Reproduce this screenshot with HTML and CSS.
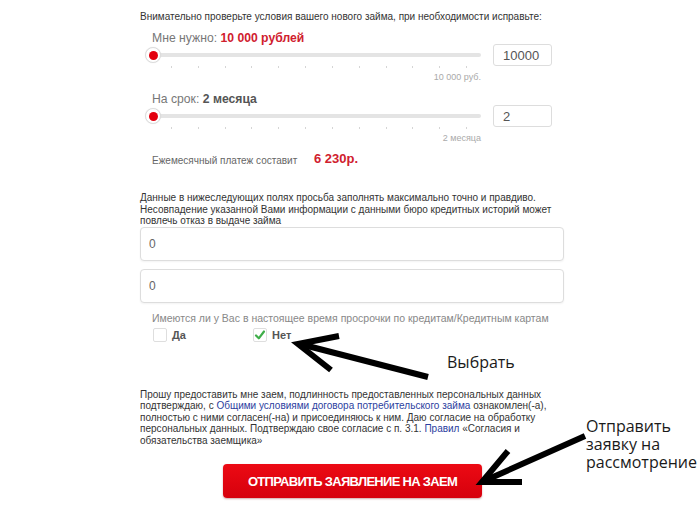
FILE: index.html
```html
<!DOCTYPE html>
<html lang="ru">
<head>
<meta charset="utf-8">
<title>Заявка на заем</title>
<link rel="stylesheet" href="styles.css">
</head>
<body>
<form class="form">
  <p class="intro">Внимательно проверьте условия вашего нового займа, при необходимости исправьте:</p>

  <div class="group first">
    <div class="label">Мне нужно: <b class="red">10 000 рублей</b></div>
    <div class="row">
      <div class="slider">
        <div class="track-wrap"><div class="track"><span class="thumb"></span></div></div>
        <div class="ticks"><i></i><i></i><i></i><i></i><i></i><i></i><i></i><i></i><i></i><i></i><i></i><i></i></div>
        <div class="caption">10 000 руб.</div>
      </div>
      <input class="num" type="text" value="10000">
    </div>
  </div>

  <div class="group second">
    <div class="label">На срок: <b class="dark">2 месяца</b></div>
    <div class="row">
      <div class="slider">
        <div class="track-wrap"><div class="track"><span class="thumb"></span></div></div>
        <div class="ticks"><i></i><i></i><i></i><i></i><i></i><i></i><i></i><i></i><i></i><i></i><i></i><i></i></div>
        <div class="caption">2 месяца</div>
      </div>
      <input class="num" type="text" value="2">
    </div>
  </div>

  <div class="payment"><span>Ежемесячный платеж составит</span><strong>6 230р.</strong></div>

  <p class="note">Данные в нижеследующих полях просьба заполнять максимально точно и правдиво.<br>Несовпадение указанной Вами информации с данными бюро кредитных историй может<br>повлечь отказ в выдаче займа</p>

  <input class="field" type="text" value="0">
  <input class="field" type="text" value="0">

  <p class="question">Имеются ли у Вас в настоящее время просрочки по кредитам/Кредитным картам</p>
  <div class="options">
    <label class="option"><span class="box"></span>Да</label>
    <label class="option"><span class="box checked"><svg viewBox="0 0 14 14" width="14" height="14"><path d="M3 7.5 L5.8 10.3 L11 3.5" fill="none" stroke="#3fae49" stroke-width="2.2" stroke-linecap="round" stroke-linejoin="round"/></svg></span>Нет</label>
  </div>

  <p class="consent">Прошу предоставить мне заем, подлинность предоставленных персональных данных<br>подтверждаю, с <a href="#">Общими условиями договора потребительского займа</a> ознакомлен(-а),<br>полностью с ними согласен(-на) и присоединяюсь к ним. Даю согласие на обработку<br>персональных данных. Подтверждаю свое согласие с п. 3.1. <a href="#">Правил</a> «Согласия и<br>обязательства заемщика»</p>

  <button class="submit" type="button">ОТПРАВИТЬ ЗАЯВЛЕНИЕ НА ЗАЕМ</button>
</form>

<div class="note-choose">Выбрать</div>
<div class="note-send"><span>Отправить</span><span>заявку на</span><span>рассмотрение</span></div>

<svg class="arrows" viewBox="0 0 700 515" width="700" height="515">
  <g fill="none" stroke="#000" stroke-width="6" stroke-linejoin="miter" stroke-linecap="butt">
    <line x1="428" y1="377" x2="300" y2="344"/>
    <polyline points="339,336 298,344 331,370"/>
    <line x1="585" y1="436" x2="484" y2="481"/>
    <polyline points="508,451 482,482 522,482"/>
  </g>
</svg>
</body>
</html>
```

FILE: styles.css
```css
html, body {
  margin: 0;
  padding: 0;
  background: #fff;
}

body {
  position: relative;
  width: 700px;
  height: 515px;
  overflow: hidden;
  font-family: "Liberation Sans", Arial, sans-serif;
}

.form {
  margin: 0 0 0 140px;
  width: 425px;
  padding-top: 11px;
}

.intro {
  margin: 0;
  font-size: 10px;
  line-height: 12px;
  color: #333;
  white-space: nowrap;
}

.group {
  padding-left: 7px;
}

.group.first {
  margin-top: 9px;
}

.group.second {
  margin-top: 10px;
}

.label {
  margin-left: 5px;
  font-size: 12.2px;
  line-height: 12px;
  color: #777;
}

.label .red {
  color: #d0202e;
}

.label .dark {
  color: #555;
}

.row {
  display: flex;
  align-items: flex-start;
  gap: 12px;
}

.slider {
  width: 334px;
}

.track-wrap {
  height: 22px;
  display: flex;
  align-items: center;
}

.track {
  position: relative;
  width: 100%;
  height: 4px;
  background: #e4e4e4;
  border-radius: 2px;
}

.thumb {
  position: absolute;
  left: -2px;
  top: -6px;
  width: 16px;
  height: 16px;
  box-sizing: border-box;
  border: 1px solid #dcdcdc;
  border-radius: 50%;
  background: #fff;
  box-shadow: 0 0 1px rgba(0, 0, 0, 0.1);
}

.thumb::after {
  content: "";
  position: absolute;
  left: 2.5px;
  top: 2.5px;
  width: 9px;
  height: 9px;
  border-radius: 50%;
  background: #e3000f;
}

.ticks {
  display: flex;
  justify-content: space-between;
  height: 2px;
  padding: 0 14px 0 24px;
}

.ticks i {
  display: block;
  width: 1px;
  height: 2px;
  background: #d5d5d5;
}

.caption {
  margin-top: 4px;
  text-align: right;
  font-size: 9px;
  line-height: 11px;
  color: #aaa;
}

.num {
  width: 59px;
  height: 22px;
  box-sizing: border-box;
  margin: 0;
  padding: 0 0 0 9px;
  border: 1px solid #ddd;
  border-radius: 3px;
  background: #fff;
  font-family: "Liberation Sans", Arial, sans-serif;
  font-size: 13px;
  color: #555;
  outline: none;
}

.payment {
  display: flex;
  align-items: flex-start;
  margin-top: 9px;
  padding-left: 12px;
}

.payment span {
  width: 162px;
  font-size: 10px;
  line-height: 16px;
  color: #666;
}

.payment strong {
  font-size: 13px;
  line-height: 11px;
  color: #d0202e;
}

.note {
  margin: 23px 0 0;
  font-size: 10px;
  line-height: 11.5px;
  color: #333;
  white-space: nowrap;
}

.field {
  display: block;
  width: 424px;
  height: 34px;
  box-sizing: border-box;
  margin: 0;
  padding: 0 0 0 8px;
  border: 1px solid #ddd;
  border-radius: 4px;
  background: #fff;
  box-shadow: 0 1px 2px rgba(0, 0, 0, 0.05);
  font-family: "Liberation Sans", Arial, sans-serif;
  font-size: 12px;
  color: #666;
  outline: none;
}

.field + .field {
  margin-top: 8px;
}

.question {
  margin: 9px 0 0;
  padding-left: 12px;
  font-size: 10.5px;
  line-height: 13px;
  color: #888;
  white-space: nowrap;
}

.options {
  display: flex;
  margin-top: 3px;
  padding-left: 13px;
}

.option {
  display: flex;
  align-items: center;
  gap: 5px;
  width: 100px;
  font-size: 11px;
  font-weight: bold;
  color: #555;
  line-height: 14px;
}

.box {
  display: block;
  width: 14px;
  height: 14px;
  box-sizing: border-box;
  border: 1px solid #dedede;
  border-radius: 2px;
  background: #fff;
}

.box svg {
  display: block;
  margin: -1px;
}

.consent {
  margin: 47px 0 0;
  font-size: 10px;
  line-height: 11.5px;
  color: #333;
  white-space: nowrap;
}

.consent a {
  color: #2b3ea0;
  text-decoration: none;
}

.submit {
  display: block;
  width: 259px;
  height: 34px;
  margin: 18px auto 0;
  padding: 0;
  border: 0;
  border-radius: 4px;
  background: linear-gradient(#ec0a14, #d6000c);
  box-shadow: 0 1px 2px rgba(120, 0, 0, 0.35);
  color: #fff;
  font-family: "Liberation Sans", Arial, sans-serif;
  font-size: 13px;
  font-weight: bold;
  letter-spacing: -0.7px;
}

.note-choose,
.note-send {
  position: absolute;
  font-family: "Open Sans", "Noto Sans", sans-serif;
  font-size: 16px;
  color: #1a1a1a;
}

.note-choose {
  left: 447px;
  top: 352px;
  line-height: 20px;
}

.note-send {
  left: 586px;
  top: 417px;
  display: flex;
  flex-direction: column;
}

.note-send span {
  display: block;
  height: 18px;
  line-height: 18px;
  overflow: visible;
}

.arrows {
  position: absolute;
  left: 0;
  top: 0;
  pointer-events: none;
}
```
